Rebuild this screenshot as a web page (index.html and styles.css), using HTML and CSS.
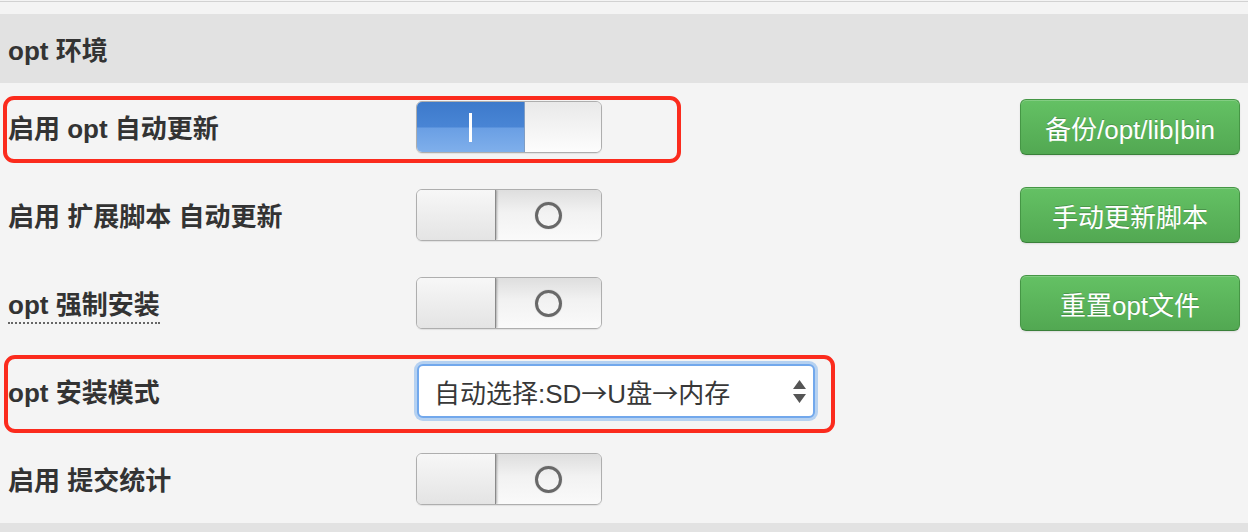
FILE: index.html
```html
<!DOCTYPE html>
<html lang="zh-CN">
<head>
<meta charset="utf-8">
<title>opt 环境</title>
<link rel="stylesheet" href="styles.css">
</head>
<body>
<div class="top"></div>
<div class="section-head">opt 环境</div>
<div class="rows">
  <div class="row">
    <div class="lbl">启用 opt 自动更新</div>
    <div class="switch on"><span class="sw-on"><i class="bar"></i></span><span class="knob"></span></div>
    <button class="btn">备份/opt/lib|bin</button>
    <div class="mark mark-1"></div>
  </div>
  <div class="row">
    <div class="lbl">启用 扩展脚本 自动更新</div>
    <div class="switch off"><span class="knob"></span><span class="sw-off"><i class="ring"></i></span></div>
    <button class="btn">手动更新脚本</button>
  </div>
  <div class="row">
    <div class="lbl"><span class="dotted">opt 强制安装</span></div>
    <div class="switch off"><span class="knob"></span><span class="sw-off"><i class="ring"></i></span></div>
    <button class="btn">重置opt文件</button>
  </div>
  <div class="row">
    <div class="lbl">opt 安装模式</div>
    <div class="select">
      <span class="select-text">自动选择:SD<span class="arr">→</span>U盘<span class="arr">→</span>内存</span>
      <svg class="arrows" width="13" height="23" viewBox="0 0 13 23"><path d="M6.5 0 L13 9 L0 9 Z M0 14 L13 14 L6.5 23 Z" fill="#555"/></svg>
    </div>
    <div></div>
    <div class="mark mark-2"></div>
  </div>
  <div class="row">
    <div class="lbl">启用 提交统计</div>
    <div class="switch off"><span class="knob"></span><span class="sw-off"><i class="ring"></i></span></div>
    <div></div>
  </div>
</div>
<div class="bottom"></div>
</body>
</html>
```

FILE: styles.css
```css
html, body {
  margin: 0;
  padding: 0;
  background: #f4f4f4;
}
body {
  font-family: "Liberation Sans", "Noto Sans CJK SC", sans-serif;
  color: #333;
}
.top {
  height: 12px;
  border-top: 1px solid #d2d2d2;
  margin-top: 1px;
}
.section-head {
  height: 69px;
  background: #e2e2e2;
  padding-left: 8px;
  display: flex;
  align-items: center;
  font-size: 26px;
  font-weight: bold;
  color: #333;
}
.row {
  position: relative;
  height: 88px;
  display: grid;
  grid-template-columns: 408px 1fr 220px;
  align-items: center;
  padding: 0 8px;
}
.lbl {
  font-size: 26px;
  font-weight: bold;
  color: #333;
  margin-top: -2px;
}
.dotted {
  border-bottom: 2px dotted #666;
  padding-bottom: 2px;
}
.switch {
  width: 186px;
  height: 52px;
  box-sizing: border-box;
  border: 1px solid #aeaeae;
  border-radius: 6px;
  overflow: hidden;
  display: flex;
  box-shadow: 0 1px 1px rgba(0,0,0,0.08);
}
.sw-on {
  width: 107px;
  background: linear-gradient(#3d7acb, #4985d5 50%, #6a9fe4 52%, #7fafeb);
  display: flex;
  align-items: center;
  justify-content: center;
}
.bar {
  width: 3px;
  height: 29px;
  background: #fff;
}
.switch.on .knob {
  flex: 1;
  background: linear-gradient(#e9e9e9, #fdfdfd);
  border-left: 1px solid #7f9dc4;
}
.switch.off .knob {
  width: 78px;
  background: linear-gradient(#f7f7f7, #e4e4e4);
  border-right: 1px solid #8a8a8a;
  box-shadow: 1px 0 2px rgba(0,0,0,0.3);
  position: relative;
  z-index: 1;
}
.sw-off {
  flex: 1;
  background: linear-gradient(#dedede, #f2f2f2 45%, #fafafa);
  display: flex;
  align-items: center;
  justify-content: center;
}
.ring {
  width: 27px;
  height: 27px;
  box-sizing: border-box;
  border: 3px solid #686868;
  border-radius: 50%;
  box-shadow: 0 0 1px rgba(0,0,0,0.4);
}
.btn {
  justify-self: end;
  width: 220px;
  height: 56px;
  border: 1px solid #459645;
  border-bottom-color: #3a803a;
  border-radius: 6px;
  background: linear-gradient(#64c164, #52a852);
  color: #fff;
  font-family: "Liberation Sans", "Noto Sans CJK SC", sans-serif;
  font-size: 26px;
  text-shadow: 0 -1px 0 rgba(0,0,0,0.2);
  box-shadow: inset 0 1px 0 rgba(255,255,255,0.2), 0 1px 2px rgba(0,0,0,0.1);
  padding: 0;
}
.select {
  width: 398px;
  height: 54px;
  box-sizing: border-box;
  border: 2px solid #72a8ec;
  border-radius: 6px;
  background: #fff;
  box-shadow: 0 0 0 3px rgba(130,180,238,0.55);
  display: flex;
  align-items: center;
  justify-content: space-between;
  padding: 0 7px 0 15px;
  margin-left: 1px;
  font-size: 26px;
  color: #383838;
}
.arr {
  font-family: "Noto Sans CJK SC", sans-serif;
}
.mark {
  position: absolute;
  box-sizing: border-box;
  border: 4px solid #fb2b1d;
  border-radius: 11px;
  pointer-events: none;
}
.mark-1 {
  left: 3px;
  top: 13px;
  width: 678px;
  height: 67px;
}
.mark-2 {
  left: 4px;
  top: 8px;
  width: 831px;
  height: 78px;
}
.bottom {
  height: 10px;
  background: #e2e2e2;
}
```
